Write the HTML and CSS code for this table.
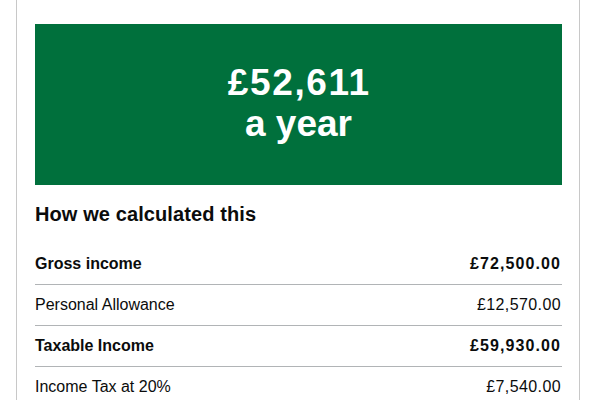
FILE: index.html
```html
<!DOCTYPE html>
<html lang="en">
<head>
<meta charset="utf-8">
<title>Take-home pay</title>
<link rel="stylesheet" href="styles.css">
</head>
<body>
<main class="page">
  <div class="panel">
    <div class="panel-amount">£52,611</div>
    <div class="panel-period">a year</div>
  </div>
  <h2 class="heading">How we calculated this</h2>
  <dl class="summary">
    <div class="row row-bold"><dt>Gross income</dt><dd>£72,500.00</dd></div>
    <div class="row"><dt>Personal Allowance</dt><dd>£12,570.00</dd></div>
    <div class="row row-bold"><dt>Taxable Income</dt><dd>£59,930.00</dd></div>
    <div class="row"><dt>Income Tax at 20%</dt><dd>£7,540.00</dd></div>
  </dl>
</main>
</body>
</html>
```
FILE: styles.css
```css
html, body {
  margin: 0;
  padding: 0;
  background: #ffffff;
}
body {
  font-family: "Liberation Sans", Arial, sans-serif;
  color: #0b0c0c;
}
.page {
  box-sizing: border-box;
  margin-left: 16px;
  width: 564px;
  min-height: 400px;
  border-left: 1px solid #c8c8c8;
  border-right: 1px solid #c8c8c8;
  padding: 24px 17px 0 18px;
}
.panel {
  background: #00703c;
  color: #ffffff;
  height: 161px;
  box-sizing: border-box;
  padding-top: 38px;
  text-align: center;
  font-weight: 700;
  font-size: 37px;
  line-height: 41px;
}
.panel-amount {
  letter-spacing: 1.6px;
  padding-left: 1.6px;
}
.heading {
  margin: 16px 0 0;
  font-size: 20px;
  line-height: 26px;
  font-weight: 700;
  letter-spacing: 0.1px;
}
.summary {
  margin: 17px 0 0;
}
.row {
  display: flex;
  justify-content: space-between;
  align-items: center;
  height: 41px;
  border-bottom: 1px solid #b1b4b6;
  box-sizing: border-box;
  font-size: 16px;
}
.row dt, .row dd {
  margin: 0;
}
.row dd {
  padding-right: 1px;
  letter-spacing: 0.4px;
}
.row-bold {
  font-weight: 700;
}
.row-bold dd {
  letter-spacing: 1.1px;
}
```
